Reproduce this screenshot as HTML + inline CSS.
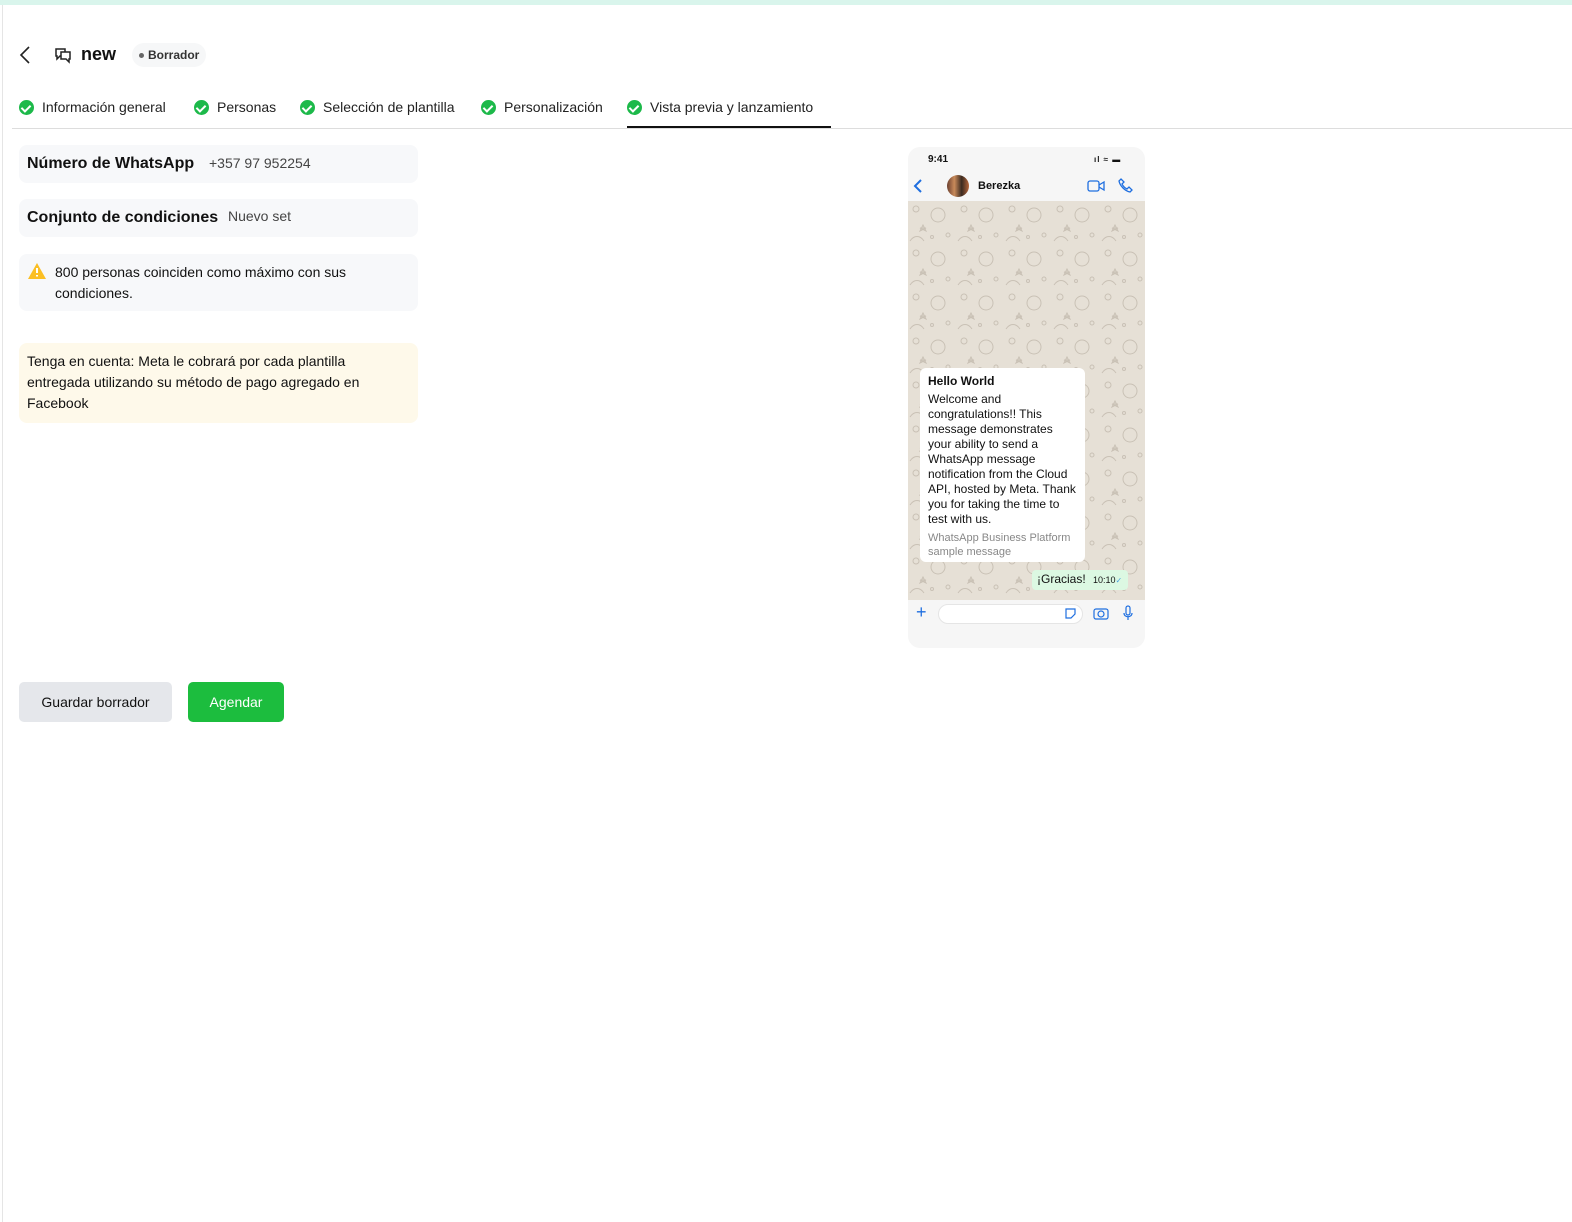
<!DOCTYPE html>
<html><head><meta charset="utf-8"><style>
*{box-sizing:border-box;margin:0;padding:0}
body{width:1572px;height:1222px;background:#fff;font-family:"Liberation Sans",sans-serif;color:#111;position:relative;overflow:hidden}
.top{position:absolute;left:0;top:0;width:1572px;height:5px;background:#d9f5ec}
.lb{position:absolute;left:2px;top:5px;width:1px;height:1217px;background:#e5e5e5}
.abs{position:absolute}
.tab{position:absolute;top:98px;font-size:14px;color:#222;display:flex;align-items:center;gap:8px;white-space:nowrap}
.chk{width:15px;height:15px;border-radius:50%;background:#1db94a;display:inline-block;position:relative}
.chk:after{content:"";position:absolute;left:4px;top:3px;width:4px;height:7px;border:solid #fff;border-width:0 2px 2px 0;transform:rotate(45deg)}
.card{position:absolute;left:19px;width:399px;background:#f7f8fa;border-radius:8px}
.btn{position:absolute;top:682px;height:40px;border-radius:5px;font-size:14px;display:flex;align-items:center;justify-content:center}
</style></head><body>
<div class="top"></div><div class="lb"></div>
<svg class="abs" style="left:18px;top:45px" width="14" height="20" viewBox="0 0 14 20"><path d="M11 2L3 10l8 8" fill="none" stroke="#222" stroke-width="1.6"/></svg>
<svg class="abs" style="left:53px;top:45px" width="20" height="20" viewBox="0 0 20 20" fill="none" stroke="#222" stroke-width="1.5"><path d="M3 4h9v7H7l-3 3v-3H3z"/><path d="M8 7h9v7h-1v3l-3-3H8z" fill="#fff"/></svg>
<div class="abs" style="left:81px;top:44px;font-size:18px;font-weight:bold">new</div>
<div class="abs" style="left:132px;top:43px;height:24px;padding:0 7px;border-radius:12px;background:#f6f7f8;font-size:12px;font-weight:bold;color:#333;display:flex;align-items:center;gap:4px"><span style="width:5px;height:5px;border-radius:50%;background:#666;display:inline-block"></span>Borrador</div>
<div class="tab" style="left:19px;top:99px"><span class="chk"></span>Información general</div>
<div class="tab" style="left:194px;top:99px"><span class="chk"></span>Personas</div>
<div class="tab" style="left:300px;top:99px"><span class="chk"></span>Selección de plantilla</div>
<div class="tab" style="left:481px;top:99px"><span class="chk"></span>Personalización</div>
<div class="tab" style="left:627px;top:99px"><span class="chk"></span>Vista previa y lanzamiento</div>
<div class="abs" style="left:12px;top:128px;width:1560px;height:1px;background:#ddd"></div>
<div class="abs" style="left:627px;top:126px;width:204px;height:2px;background:#111"></div>

<div class="card" style="top:145px;height:38px"><span class="abs" style="left:8px;top:10px;font-size:16px;font-weight:bold">Número de WhatsApp</span><span class="abs" style="left:190px;top:10px;font-size:14px;color:#444">+357 97 952254</span></div>
<div class="card" style="top:199px;height:38px"><span class="abs" style="left:8px;top:10px;font-size:16px;font-weight:bold">Conjunto de condiciones</span><span class="abs" style="left:209px;top:9px;font-size:14px;color:#444">Nuevo set</span></div>
<div class="card" style="top:254px;height:57px"><svg class="abs" style="left:8px;top:8px" width="20" height="18" viewBox="0 0 20 18"><path d="M10 1L19 17H1z" fill="#fbbf24"/><path d="M10 6v5M10 13v1.5" stroke="#fff" stroke-width="2"/></svg><div class="abs" style="left:36px;top:8px;font-size:14px;line-height:21px;width:330px">800 personas coinciden como máximo con sus condiciones.</div></div>
<div class="card" style="top:343px;height:80px;background:#fef9ea"><div class="abs" style="left:8px;top:8px;font-size:14px;line-height:21px;width:380px">Tenga en cuenta: Meta le cobrará por cada plantilla entregada utilizando su método de pago agregado en Facebook</div></div>

<div class="btn" style="left:19px;width:153px;background:#e5e7eb;color:#111">Guardar borrador</div>
<div class="btn" style="left:188px;width:96px;background:#1cbd3e;color:#fff">Agendar</div>

<div class="abs" style="left:908px;top:147px;width:237px;height:501px;background:#f6f6f6;border-radius:12px;overflow:hidden">
<div class="abs" style="left:20px;top:7px;font-size:10px;font-weight:bold">9:41</div>
<div class="abs" style="left:186px;top:8px;font-size:8px;font-weight:bold;letter-spacing:1px">ıl ≈ ▬</div>
<svg class="abs" style="left:5px;top:32px" width="10" height="14" viewBox="0 0 10 14"><path d="M8 1L2 7l6 6" fill="none" stroke="#1f6fe0" stroke-width="2"/></svg>
<div class="abs" style="left:39px;top:28px;width:22px;height:22px;border-radius:50%;background:linear-gradient(90deg,#6b4030,#c98a5a,#3b2a20,#b5653a)"></div>
<div class="abs" style="left:70px;top:33px;font-size:11px;font-weight:bold">Berezka</div>
<svg class="abs" style="left:179px;top:33px" width="18" height="12" viewBox="0 0 18 12" fill="none" stroke="#1f6fe0" stroke-width="1.3"><rect x="1" y="1" width="11" height="10" rx="2"/><path d="M12 5l5-3v8l-5-3"/></svg>
<svg class="abs" style="left:210px;top:31px" width="15" height="15" viewBox="0 0 15 15" fill="none" stroke="#1f6fe0" stroke-width="1.3"><path d="M3 1l3 3-2 2c1 2 3 4 5 5l2-2 3 3-2 2C7 13 2 8 1 3z"/></svg>
<svg class="abs" style="left:0;top:54px" width="237" height="399"><defs><pattern id="p" width="48" height="44" patternUnits="userSpaceOnUse"><g fill="none" stroke="#c9c1b5" stroke-width="1"><circle cx="8" cy="8" r="3"/><circle cx="30" cy="14" r="7"/><path d="M12 30l3 -6 3 6 -6-3h6z"/><circle cx="40" cy="34" r="2"/><path d="M2 40c4-6 10-6 14 0"/><circle cx="24" cy="36" r="1.5"/></g></pattern></defs><rect width="237" height="399" fill="#e6e0d6"/><rect width="237" height="399" fill="url(#p)"/></svg>
<div class="abs" style="left:12px;top:221px;width:165px;height:194px;background:#fff;border-radius:6px;padding:6px 8px;font-size:12px;line-height:15px">
<div style="font-weight:bold;margin-bottom:3px">Hello World</div>
<div>Welcome and congratulations!! This message demonstrates your ability to send a WhatsApp message notification from the Cloud API, hosted by Meta. Thank you for taking the time to test with us.</div>
<div style="color:#888;font-size:11px;line-height:14px;margin-top:4px">WhatsApp Business Platform sample message</div></div>
<div class="abs" style="left:124px;top:423px;width:96px;height:20px;background:#dcf8e2;border-radius:4px;font-size:12px;padding:2px 5px">¡Gracias! <span style="font-size:9px;margin-left:4px">10:10</span><span style="font-size:8px;color:#4aa3df">✓</span></div>
<div class="abs" style="left:8px;top:456px;font-size:18px;color:#1f6fe0;line-height:18px">+</div>
<div class="abs" style="left:30px;top:457px;width:145px;height:20px;background:#fff;border:1px solid #e5e5e5;border-radius:10px"></div>
<svg class="abs" style="left:156px;top:460px" width="13" height="13" viewBox="0 0 13 13" fill="none" stroke="#1f6fe0" stroke-width="1.2"><path d="M2 2h9v5l-4 4H2z"/></svg>
<svg class="abs" style="left:185px;top:459px" width="16" height="14" viewBox="0 0 16 14" fill="none" stroke="#1f6fe0" stroke-width="1.2"><rect x="1" y="3" width="14" height="10" rx="2"/><circle cx="8" cy="8" r="3"/></svg>
<svg class="abs" style="left:215px;top:458px" width="10" height="16" viewBox="0 0 10 16" fill="none" stroke="#1f6fe0" stroke-width="1.2"><rect x="3" y="1" width="4" height="9" rx="2"/><path d="M1 8c0 5 8 5 8 0M5 12v3"/></svg>
</div>
</body></html>
